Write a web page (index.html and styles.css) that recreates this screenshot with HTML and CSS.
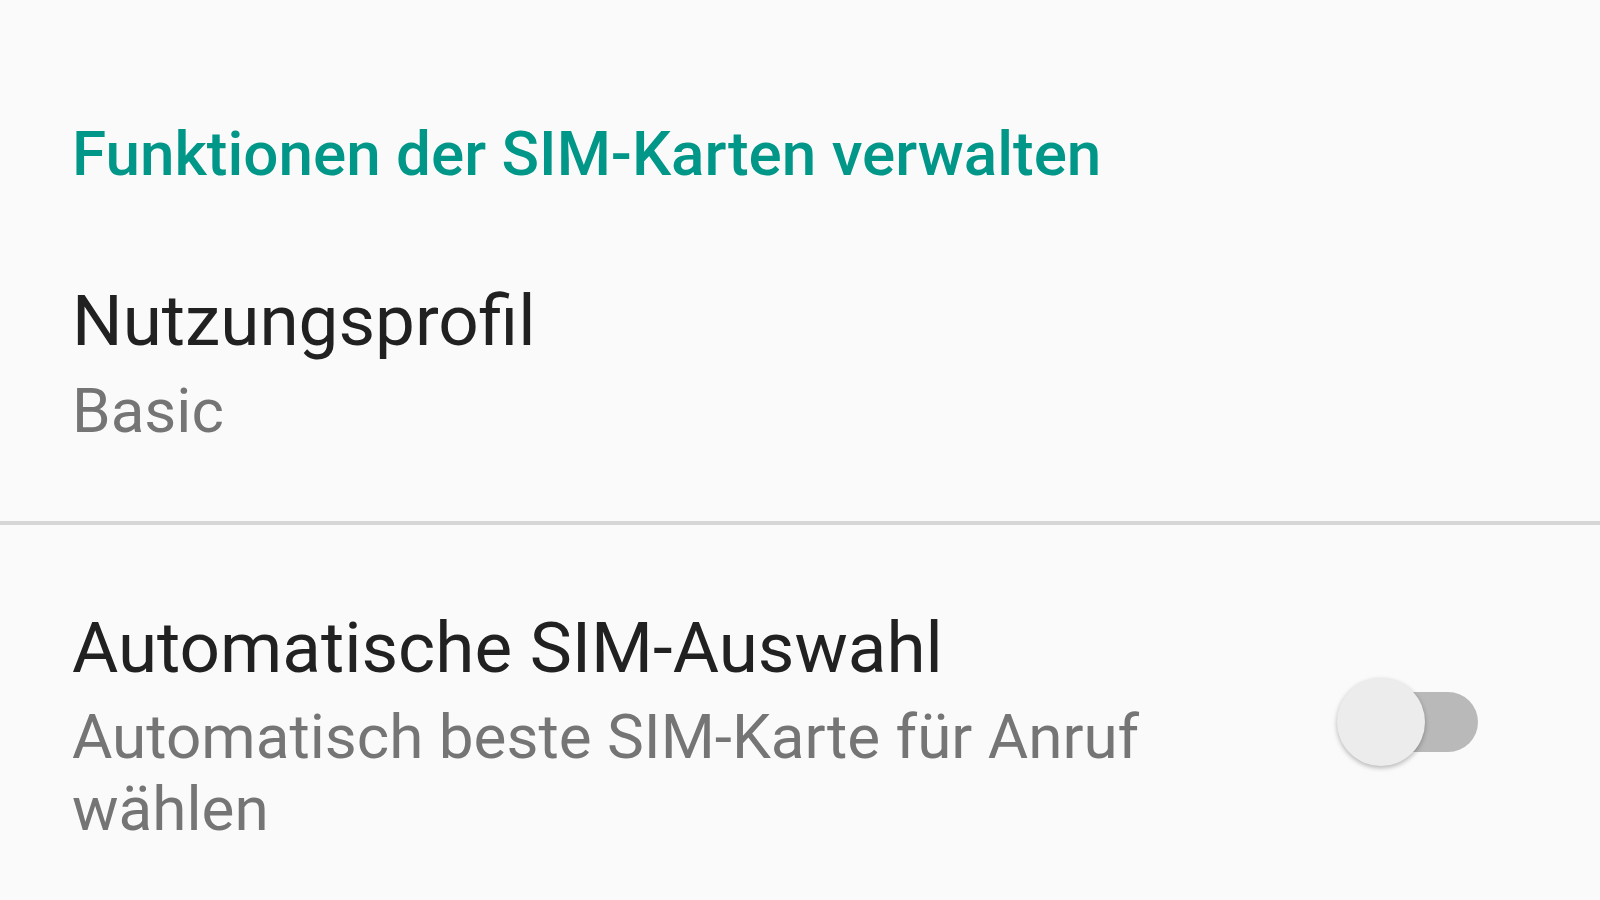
FILE: index.html
```html
<!DOCTYPE html>
<html lang="de">
<head>
    <meta charset="UTF-8">
    <meta name="viewport" content="width=device-width, initial-scale=1.0">
    <title>SIM-Karten</title>
    <link rel="stylesheet" href="styles.css">
</head>
<body>

    <!-- Bereich: SIM-Karten -->
    <div class="section">
        <h2 class="section-title">Funktionen der SIM-Karten verwalten</h2>

        <div class="pref pref-profile">
            <div class="pref-text">
                <div class="pref-title">Nutzungsprofil</div>
                <div class="pref-summary">Basic</div>
            </div>
        </div>
    </div>

    <div class="divider"></div>

    <div class="section">
        <div class="pref pref-switch">
            <div class="pref-text">
                <div class="pref-title">Automatische SIM-Auswahl</div>
                <div class="pref-summary">Automatisch beste SIM-Karte für Anruf wählen</div>
            </div>
            <div class="switch">
                <span class="switch-track"></span>
                <span class="switch-thumb"></span>
            </div>
        </div>
    </div>

</body>
</html>
```

FILE: styles.css
```css
/* Allgemein */
body {
    margin: 0;
    padding: 0;
    background-color: #fafafa;
    font-family: Roboto, "Noto Sans", sans-serif;
    color: #212121;
}

.section {
    padding: 0 0 0 72px;
}

.section-title {
    margin: 0;
    padding-top: 118px;
    font-size: 62px;
    line-height: 72px;
    font-weight: 500;
    color: #009688;
}

/* Einträge */
.pref {
    display: flex;
    align-items: flex-start;
}

.pref-text {
    flex: 1;
}

.pref-title {
    font-size: 71px;
    line-height: 80px;
    color: #212121;
}

.pref-summary {
    font-size: 62px;
    line-height: 72px;
    color: #757575;
}

.pref-profile {
    padding-top: 91px;
    padding-bottom: 74px;
}

.pref-profile .pref-summary {
    margin-top: 14px;
}

.divider {
    height: 4px;
    background-color: #d6d6d6;
}

.pref-switch {
    padding-top: 83px;
    padding-right: 122px;
}

.pref-switch .pref-summary {
    margin-top: 13px;
    max-width: 1100px;
}

/* Schalter */
.switch {
    position: relative;
    width: 138px;
    height: 60px;
    margin-left: 160px;
    margin-top: 84px;
}

.switch-track {
    display: block;
    width: 100%;
    height: 100%;
    border-radius: 30px;
    background-color: #b9b9b9;
}

.switch-thumb {
    position: absolute;
    left: -3px;
    top: -14px;
    width: 88px;
    height: 88px;
    border-radius: 50%;
    background-color: #ececec;
    box-shadow: 0 2px 5px rgba(0, 0, 0, 0.28);
}
```
